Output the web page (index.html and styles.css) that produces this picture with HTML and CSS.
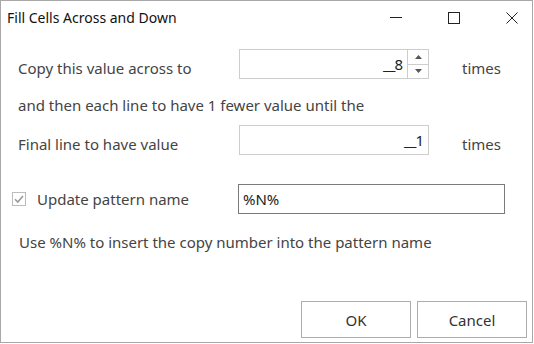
FILE: index.html
```html
<!DOCTYPE html>
<html lang="en">
<head>
    <meta charset="UTF-8">
    <title>Fill Cells Across and Down</title>
    <link rel="stylesheet" href="styles.css">
</head>
<body>
    <div class="window">
        <div class="titlebar">
            <span class="title">Fill Cells Across and Down</span>
            <div class="caption-buttons">
                <span class="cap-btn">
                    <svg width="12" height="12" viewBox="0 0 12 12"><path d="M0 5.5H12" stroke="#222" stroke-width="1"/></svg>
                </span>
                <span class="cap-btn">
                    <svg width="12" height="12" viewBox="0 0 12 12"><rect x="0.5" y="0.5" width="11" height="11" fill="none" stroke="#222" stroke-width="1"/></svg>
                </span>
                <span class="cap-btn">
                    <svg width="12" height="12" viewBox="0 0 12 12"><path d="M0.5 0.5L11.5 11.5M11.5 0.5L0.5 11.5" stroke="#222" stroke-width="1"/></svg>
                </span>
            </div>
        </div>

        <div class="content">
            <div class="form-grid">
                <div class="label">Copy this value across to</div>
                <div class="field spin">
                    <span class="value">__8</span>
                    <div class="spinner">
                        <span class="spin-up">
                            <svg width="7" height="4" viewBox="0 0 7 4"><path d="M0 4L3.5 0L7 4Z" fill="#555"/></svg>
                        </span>
                        <span class="spin-down">
                            <svg width="7" height="4" viewBox="0 0 7 4"><path d="M0 0L3.5 4L7 0Z" fill="#555"/></svg>
                        </span>
                    </div>
                </div>
                <div class="label times">times</div>

                <div class="full-line">and then each line to have 1 fewer value until the</div>

                <div class="label">Final line to have value</div>
                <div class="field">
                    <span class="value">__1</span>
                </div>
                <div class="label times">times</div>
            </div>

            <div class="check-row">
                <span class="checkbox">
                    <svg width="12" height="12" viewBox="0 0 12 12"><path d="M2 6.2L4.8 9L10 3" fill="none" stroke="#9a9a9a" stroke-width="1.6"/></svg>
                </span>
                <span class="check-label">Update pattern name</span>
                <div class="text-input">%N%</div>
            </div>

            <div class="hint">Use %N% to insert the copy number into the pattern name</div>
        </div>

        <div class="footer">
            <button class="btn">OK</button>
            <button class="btn">Cancel</button>
        </div>
    </div>
</body>
</html>
```

FILE: styles.css
```css
html, body {
    margin: 0;
    padding: 0;
    background-color: white;
}
body {
    font-family: "Noto Sans", "Open Sans", sans-serif;
    font-size: 15px;
    color: #444;
}
.window {
    width: 533px;
    height: 343px;
    box-sizing: border-box;
    border: 1px solid #a8a8a8;
    display: flex;
    flex-direction: column;
}
.titlebar {
    height: 34px;
    display: flex;
    align-items: center;
    justify-content: space-between;
}
.title {
    padding-left: 6px;
    color: #111;
    font-size: 14px;
    margin-top: -2px;
}
.caption-buttons {
    display: flex;
    align-self: flex-start;
    padding-top: 11px;
}
.cap-btn {
    display: flex;
    width: 12px;
    height: 12px;
    margin-left: 46px;
}
.cap-btn:last-child {
    margin-right: 14px;
}
.content {
    padding: 14px 0 0 11px;
    display: flex;
    flex-direction: column;
}
.form-grid {
    display: grid;
    grid-template-columns: 221px 190px auto;
    padding-left: 6px;
}
.label {
    align-self: start;
    padding-top: 9px;
    line-height: 20px;
}
.times {
    margin-left: 33px;
}
.full-line {
    grid-column: 1 / 4;
    line-height: 20px;
    padding: 16px 0 10px;
}
.field {
    height: 30px;
    box-sizing: border-box;
    border: 1px solid #cdcdcd;
    display: flex;
    justify-content: flex-end;
    align-items: center;
}
.value {
    padding-right: 5px;
    line-height: 20px;
    color: #222;
    letter-spacing: -1px;
}
.spinner {
    width: 20px;
    height: 100%;
    border-left: 1px solid #cdcdcd;
    display: flex;
    flex-direction: column;
}
.spin-up,
.spin-down {
    flex: 1;
    display: flex;
    align-items: center;
    justify-content: center;
}
.spin-up {
    border-bottom: 1px solid #cdcdcd;
}
.check-row {
    display: flex;
    align-items: center;
    margin-top: 29px;
}
.checkbox {
    width: 14px;
    height: 14px;
    box-sizing: border-box;
    border: 1px solid #bcbcbc;
    display: flex;
    align-items: center;
    justify-content: center;
}
.check-label {
    width: 201px;
    margin-left: 11px;
    line-height: 20px;
}
.text-input {
    width: 267px;
    height: 30px;
    box-sizing: border-box;
    border: 1px solid #7a7a7a;
    padding-left: 4px;
    line-height: 28px;
    color: #222;
}
.hint {
    margin-top: 18px;
    padding-left: 7px;
    line-height: 20px;
}
.footer {
    margin-top: auto;
    display: flex;
    justify-content: flex-end;
    gap: 6px;
    padding: 0 5px 4px 0;
}
.btn {
    width: 110px;
    height: 37px;
    background-color: white;
    border: 1px solid #adadad;
    font-family: "Noto Sans", "Open Sans", sans-serif;
    font-size: 15px;
    color: #333;
    padding: 0;
}
```
